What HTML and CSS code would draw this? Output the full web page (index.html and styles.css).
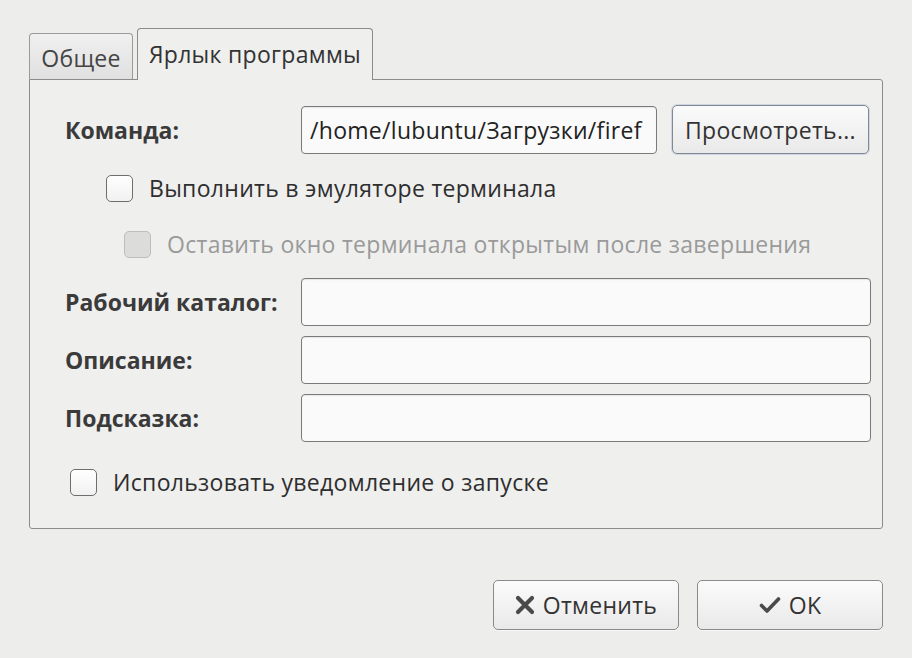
FILE: index.html
```html
<!DOCTYPE html>
<html lang="ru">
<head>
<meta charset="utf-8">
<title>Ярлык программы</title>
<link rel="stylesheet" href="styles.css">
</head>
<body>
<div class="dialog">
  <div class="tabs">
    <div class="tab">Общее</div>
    <div class="tab active">Ярлык программы</div>
  </div>
  <div class="panel">
    <div class="row cmd-row">
      <div class="label">Команда:</div>
      <div class="input cmd-input">/home/lubuntu/Загрузки/firef</div>
      <div class="btn browse">Просмотреть...</div>
    </div>
    <div class="check cb1">
      <span class="box"></span>
      <span class="ctext">Выполнить в эмуляторе терминала</span>
    </div>
    <div class="check cb2 disabled">
      <span class="box"></span>
      <span class="ctext">Оставить окно терминала открытым после завершения</span>
    </div>
    <div class="row field f1">
      <div class="label">Рабочий каталог:</div>
      <div class="input wide"></div>
    </div>
    <div class="row field f2">
      <div class="label">Описание:</div>
      <div class="input wide"></div>
    </div>
    <div class="row field f3">
      <div class="label">Подсказка:</div>
      <div class="input wide"></div>
    </div>
    <div class="check cb3">
      <span class="box"></span>
      <span class="ctext">Использовать уведомление о запуске</span>
    </div>
  </div>
  <div class="actions">
    <div class="btn action">
      <svg class="icon" width="20" height="20" viewBox="0 0 20 20"><path d="M3 3 L17 17 M17 3 L3 17" stroke="#4a4a4a" stroke-width="4.2" stroke-linecap="round"/></svg>
      <span>Отменить</span>
    </div>
    <div class="btn action">
      <svg class="icon" width="22" height="20" viewBox="0 0 22 20"><path d="M2.5 10.5 L8 16 L19.5 4" stroke="#4a4a4a" stroke-width="3.6" fill="none" stroke-linecap="round" stroke-linejoin="round"/></svg>
      <span>OK</span>
    </div>
  </div>
</div>
</body>
</html>
```

FILE: styles.css
```css
html, body {
  margin: 0;
  padding: 0;
  background: #ededec;
}
body {
  width: 912px;
  height: 658px;
  overflow: hidden;
  font-family: "Open Sans", "DejaVu Sans", sans-serif;
  font-size: 23px;
  letter-spacing: 0.3px;
  color: #333333;
}
.dialog {
  padding: 28px 29px 0 29px;
}
.tabs {
  display: flex;
  align-items: flex-end;
  height: 51px;
  position: relative;
  z-index: 1;
}
.tab {
  box-sizing: border-box;
  height: 46px;
  width: 104px;
  margin-right: 4px;
  border: 1px solid #9a9a9a;
  border-bottom: none;
  border-radius: 4px 4px 0 0;
  background: linear-gradient(#f0f0f0, #e0e0e0);
  display: flex;
  align-items: center;
  justify-content: center;
  color: #444;
  padding-top: 2px;
}
.tab.active {
  width: 236px;
  height: 52px;
  margin-bottom: -1px;
  background: #efefee;
  color: #333;
  border-color: #8a8a8a;
  padding-top: 0;
  padding-bottom: 2px;
}
.panel {
  box-sizing: border-box;
  height: 450px;
  border: 1px solid #8c8c8c;
  border-radius: 0 3px 3px 3px;
  background: #efefee;
  padding: 25px 11px 0 35px;
  display: flex;
  flex-direction: column;
}
.row {
  display: flex;
  align-items: center;
}
.label {
  width: 236px;
  flex: none;
  font-weight: bold;
  letter-spacing: 0;
  color: #3a3a3a;
}
.input {
  box-sizing: border-box;
  height: 48px;
  border: 1px solid #7a7a7a;
  border-radius: 4px;
  background: #fafafa;
  box-shadow: inset 0 1px 1px rgba(0,0,0,0.08);
  display: flex;
  align-items: center;
  padding: 0 8px;
  white-space: nowrap;
  overflow: hidden;
  color: #222;
}
.cmd-row {
  height: 49px;
}
.cmd-input {
  width: 356px;
  margin-top: 1px;
}
.btn {
  box-sizing: border-box;
  border: 1px solid #8a8a8a;
  border-radius: 5px;
  background: linear-gradient(#fbfbfb, #e9e9e9);
  display: flex;
  align-items: center;
  justify-content: center;
  color: #333;
  box-shadow: 0 1px 0 rgba(255,255,255,0.6);
  white-space: nowrap;
}
.browse {
  width: 197px;
  height: 49px;
  margin-left: 15px;
  border-color: #7f8a96;
  box-shadow: 0 0 0 1px rgba(150,170,195,0.35);
}
.check {
  display: flex;
  align-items: center;
  height: 28px;
}
.box {
  box-sizing: border-box;
  width: 27px;
  height: 27px;
  border: 1px solid #6e6e6e;
  border-radius: 5px;
  background: linear-gradient(#ffffff, #f1f1f1);
  flex: none;
}
.ctext {
  margin-left: 16px;
  color: #2e2e2e;
  white-space: nowrap;
}
.cb1 {
  margin-top: 20px;
  margin-left: 41px;
}
.cb2 {
  margin-top: 28px;
  margin-left: 59px;
}
.disabled .box {
  background: #dcdcdb;
  border-color: #bdbdbc;
}
.disabled .ctext {
  color: #9a9a9a;
}
.field {
  height: 48px;
}
.f1 {
  margin-top: 20px;
}
.f2, .f3 {
  margin-top: 10px;
}
.wide {
  width: 570px;
}
.cb3 {
  margin-top: 26px;
  margin-left: 5px;
}
.actions {
  display: flex;
  justify-content: flex-end;
  gap: 18px;
  margin-top: 51px;
}
.action {
  width: 186px;
  height: 50px;
  gap: 8px;
}
.icon {
  flex: none;
}
```
